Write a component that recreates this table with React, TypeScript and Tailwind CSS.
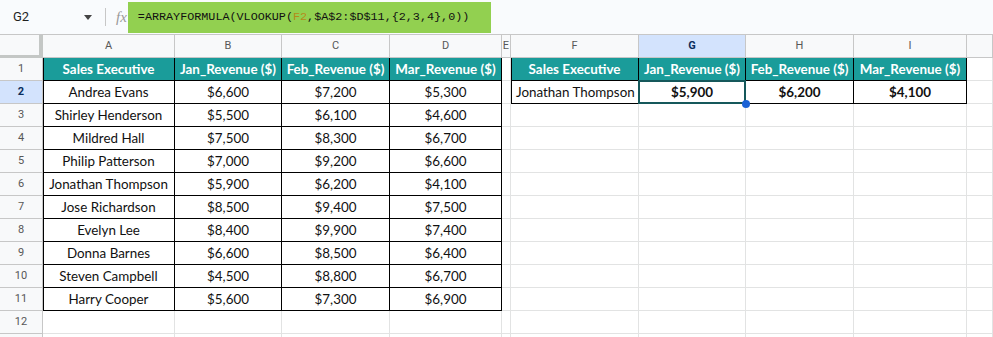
import React from 'react';

const cols = ['A', 'B', 'C', 'D', 'E', 'F', 'G', 'H', 'I', ''];

const headers = ['Sales Executive', 'Jan_Revenue ($)', 'Feb_Revenue ($)', 'Mar_Revenue ($)'];

const rows: string[][] = [
  ['Andrea Evans', '$6,600', '$7,200', '$5,300'],
  ['Shirley Henderson', '$5,500', '$6,100', '$4,600'],
  ['Mildred Hall', '$7,500', '$8,300', '$6,700'],
  ['Philip Patterson', '$7,000', '$9,200', '$6,600'],
  ['Jonathan Thompson', '$5,900', '$6,200', '$4,100'],
  ['Jose Richardson', '$8,500', '$9,400', '$7,500'],
  ['Evelyn Lee', '$8,400', '$9,900', '$7,400'],
  ['Donna Barnes', '$6,600', '$8,500', '$6,400'],
  ['Steven Campbell', '$4,500', '$8,800', '$6,700'],
  ['Harry Cooper', '$5,600', '$7,300', '$6,900'],
];

const lookup = ['Jonathan Thompson', '$5,900', '$6,200', '$4,100'];

const grid = 'grid grid-cols-[43px_132px_107px_108px_112px_9px_128px_107px_108px_113px_1fr]';

const cellFont = { fontFamily: 'Lato, "Open Sans", sans-serif' };

function Cell({ r, c }: { r: number; c: number }) {
  // r = sheet row (1-based), c = column index 0..9 (A..)
  let text = '';
  let cls = 'border-r border-b border-[#e2e3e3] bg-white text-[#111]';
  let align = 'justify-center';
  let extra = '';

  const inLeft = c <= 3 && r <= 11;
  const inRight = c >= 5 && c <= 8 && r <= 2;

  if (inLeft) {
    cls = 'border-r border-b border-black';
    if (r === 1) {
      text = headers[c];
      cls += ' bg-[#1a9c9a] text-white font-bold';
    } else {
      text = rows[r - 2][c];
      cls += ' bg-white text-[#111]';
    }
    if (c === 0) extra = 'shadow-[inset_1px_0_0_#000]';
  } else if (inRight) {
    const k = c - 5;
    cls = 'border-r border-b border-black';
    if (r === 1) {
      text = headers[k];
      cls += ' bg-[#1a9c9a] text-white font-bold';
    } else {
      text = lookup[k];
      cls += ' bg-white text-[#111]';
      if (k === 0) align = 'justify-start pl-[5px]';
      else cls += ' font-bold';
    }
    if (k === 0) extra = 'shadow-[inset_1px_0_0_#000]';
  }

  return (
    <div className={`relative flex items-center h-[23px] text-[13.4px] whitespace-nowrap overflow-visible ${align} ${cls} ${extra}`} style={cellFont}>
      {text}
      {r === 2 && c === 6 && (
        <>
          <div className="absolute -left-px -top-px right-[-1px] bottom-[-1px] border-2 border-[#15585b] pointer-events-none" />
          <div className="absolute right-[-5px] bottom-[-5px] w-[8px] h-[8px] rounded-full bg-[#1a62d6] z-10" />
        </>
      )}
    </div>
  );
}

export default function App() {
  const sheetRows = Array.from({ length: 13 }, (_, i) => i + 1);

  return (
    <div className="w-[993px] h-[337px] overflow-hidden bg-white" style={{ fontFamily: 'Roboto, Arial, sans-serif' }}>
      {/* Formula bar */}
      <div className="flex items-center h-[35px] bg-[#f9fbfd] border-b border-[#c7c7c7]">
        <div className="w-[82px] pl-[13px] text-[13px] text-[#1f1f1f]">G2</div>
        <svg width="8" height="5" viewBox="0 0 8 5" className="ml-[2px]">
          <path d="M0 0h8L4 5z" fill="#444" />
        </svg>
        <div className="ml-[13px] w-px h-[18px] bg-[#c7c7c7]" />
        <span className="ml-[10px] text-[15px] italic text-[#999]" style={{ fontFamily: '"Liberation Serif", serif' }}>fx</span>
        <div className="ml-[1px] self-start mt-[2px] h-[31px] w-[363px] bg-[#92d050] flex items-center pl-[10px] text-[11.75px] text-[#111]" style={{ fontFamily: '"Liberation Mono", monospace' }}>
          =ARRAYFORMULA(VLOOKUP(<span className="text-[#b58a1a]">F2</span>,$A$2:$D$11,{'{'}2,3,4{'}'},0))
        </div>
      </div>

      {/* Column headers */}
      <div className={`${grid} h-[23px] bg-[#f8f9fa]`}>
        <div className="border-r-[4px] border-b-[3px] border-[#c4c7c5]" />
        {cols.map((c, i) => (
          <div
            key={i}
            className={`flex items-center justify-center text-[11px] border-r border-b border-[#c7c7c7] ${
              c === 'G' ? 'bg-[#d3e3fd] font-bold text-[#0b2e5c]' : 'text-[#575757]'
            }`}
          >
            {c}
          </div>
        ))}
      </div>

      {/* Rows */}
      {sheetRows.map((r) => (
        <div key={r} className={grid}>
          <div
            className={`flex items-center justify-center h-[23px] text-[11px] border-r border-b border-[#c7c7c7] ${
              r === 2 ? 'bg-[#d3e3fd] font-bold text-[#0b2e5c]' : 'bg-[#f8f9fa] text-[#575757]'
            }`}
          >
            {r <= 12 ? r : ''}
          </div>
          {cols.map((_, c) => (
            <Cell key={c} r={r} c={c} />
          ))}
        </div>
      ))}
    </div>
  );
}
